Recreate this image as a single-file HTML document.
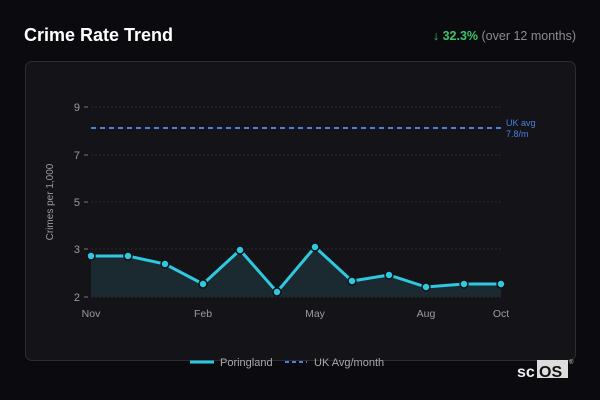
<!DOCTYPE html><html><head><style>
body{margin:0;width:600px;height:400px;background:#0b0b0f;font-family:"Liberation Sans",sans-serif;position:relative;overflow:hidden}
.t{position:absolute;left:24px;top:25px;color:#fff;font-weight:bold;font-size:18px}
.r{position:absolute;right:24px;top:29px;font-size:12.5px;color:#8a8a90}
.r b{color:#3cc46a}
.card{position:absolute;left:25px;top:61px;width:549px;height:298px;border:1px solid #2c2c32;border-radius:7px;background:#141418}
</style></head><body>
<div class="t">Crime Rate Trend</div>
<div class="r"><b>↓ 32.3%</b> (over 12 months)</div>
<div class="card"></div>
<svg width="600" height="400" style="position:absolute;left:0;top:0" font-family="Liberation Sans">
<g stroke="#2a2a30" stroke-dasharray="2 2"><line x1="91" y1="107" x2="501" y2="107"/><line x1="91" y1="155" x2="501" y2="155"/><line x1="91" y1="202" x2="501" y2="202"/><line x1="91" y1="249" x2="501" y2="249"/><line x1="91" y1="297" x2="501" y2="297"/></g>
<g fill="#9a9aa0" font-size="11" text-anchor="end"><text x="80" y="111">9</text><text x="80" y="159">7</text><text x="80" y="206">5</text><text x="80" y="253">3</text><text x="80" y="301">2</text></g>
<g stroke="#777" ><line x1="84" y1="107" x2="88" y2="107"/><line x1="84" y1="155" x2="88" y2="155"/><line x1="84" y1="202" x2="88" y2="202"/><line x1="84" y1="249" x2="88" y2="249"/><line x1="84" y1="297" x2="88" y2="297"/></g>
<text transform="translate(53,202) rotate(-90)" fill="#9a9aa0" font-size="10" text-anchor="middle">Crimes per 1,000</text>
<line x1="91" y1="128" x2="501" y2="128" stroke="#4a7fe0" stroke-width="2" stroke-dasharray="5 4"/>
<text x="506" y="126" fill="#4a7fe0" font-size="9">UK avg</text><text x="506" y="137" fill="#4a7fe0" font-size="9">7.8/m</text>
<polygon fill="#1a2a30" points="91,297 91,256 128,256 165,264 203,284 240,250 277,292 315,247 352,281 389,275 426,287 464,284 501,284 501,297"/>
<polyline fill="none" stroke="#2ec8e0" stroke-width="3" points="91,256 128,256 165,264 203,284 240,250 277,292 315,247 352,281 389,275 426,287 464,284 501,284"/>
<g fill="#2ec8e0" stroke="#111" stroke-width="1.5"><circle cx="91" cy="256" r="4"/><circle cx="128" cy="256" r="4"/><circle cx="165" cy="264" r="4"/><circle cx="203" cy="284" r="4"/><circle cx="240" cy="250" r="4"/><circle cx="277" cy="292" r="4"/><circle cx="315" cy="247" r="4"/><circle cx="352" cy="281" r="4"/><circle cx="389" cy="275" r="4"/><circle cx="426" cy="287" r="4"/><circle cx="464" cy="284" r="4"/><circle cx="501" cy="284" r="4"/></g>
<g fill="#9a9aa0" font-size="10.5" text-anchor="middle"><text x="91" y="317">Nov</text><text x="203" y="317">Feb</text><text x="315" y="317">May</text><text x="426" y="317">Aug</text><text x="501" y="317">Oct</text></g>
<line x1="190" y1="362" x2="214" y2="362" stroke="#2ec8e0" stroke-width="3"/>
<text x="220" y="366" fill="#aaa" font-size="11">Poringland</text>
<line x1="285" y1="362" x2="307" y2="362" stroke="#4a7fe0" stroke-width="2" stroke-dasharray="4 3"/>
<text x="314" y="366" fill="#aaa" font-size="11">UK Avg/month</text>
<text x="517" y="377" fill="#eee" font-size="16" font-weight="bold">sc</text>
<rect x="537" y="360" width="31" height="18" fill="#ddd"/>
<text x="539" y="377" fill="#111" font-size="16" font-weight="bold">OS</text>
<text x="569" y="364" fill="#ccc" font-size="6">®</text>
</svg>
</body></html>
